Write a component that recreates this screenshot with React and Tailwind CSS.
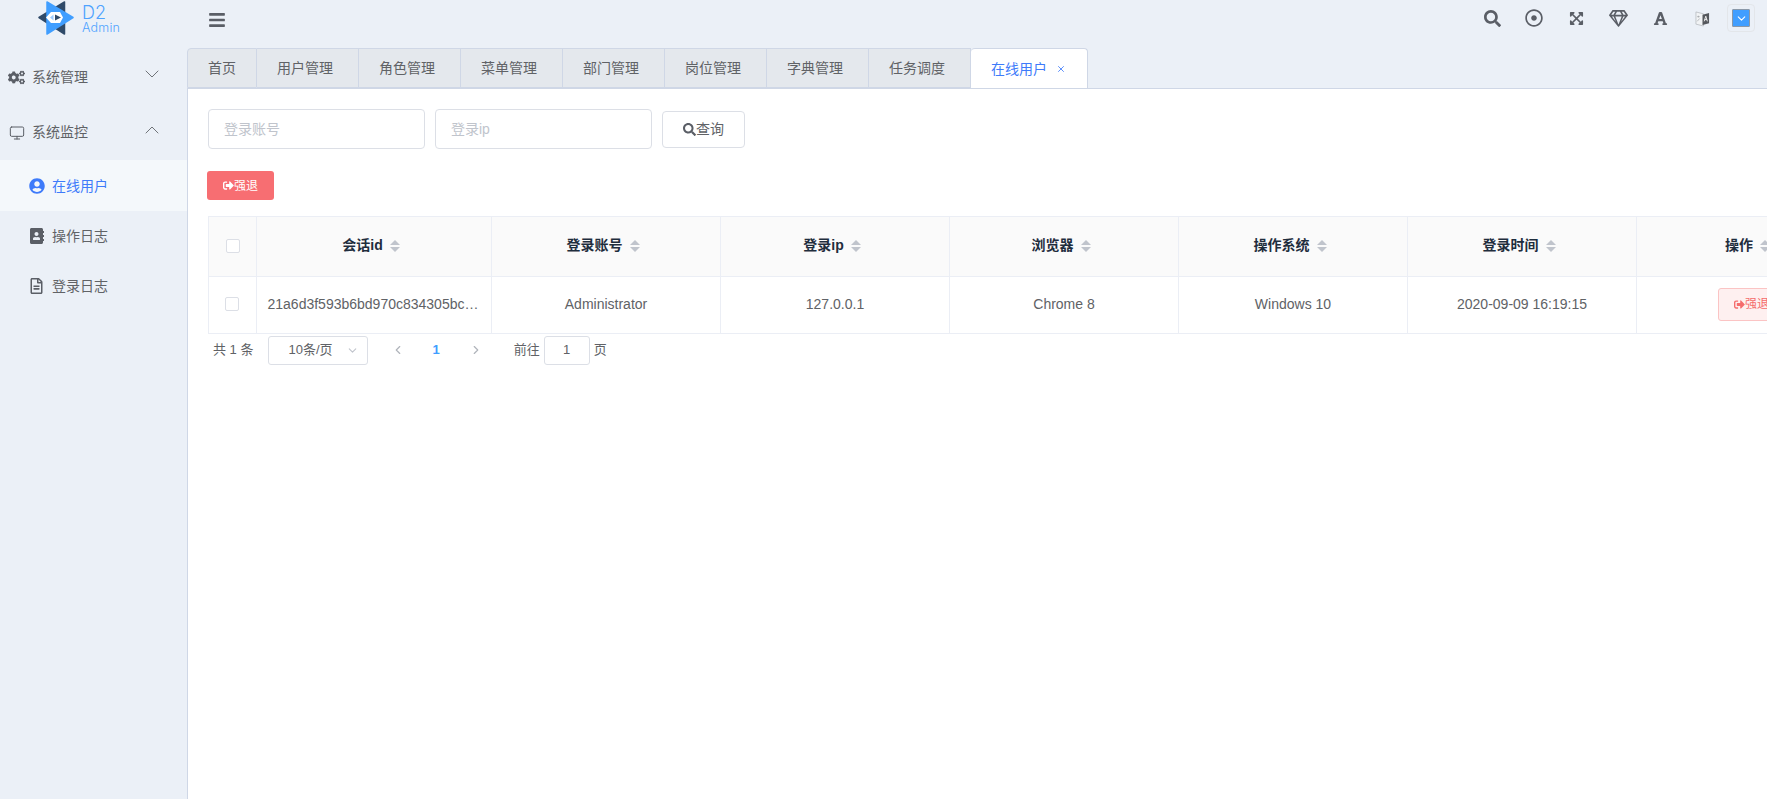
import React from "react";
import { FaSearch, FaRegDotCircle, FaExpandArrowsAlt, FaRegGem, FaFont, FaCogs, FaUserCircle, FaAddressBook, FaRegFileAlt, FaSignOutAlt, FaBars } from "react-icons/fa";
import { ChevronDown, ChevronUp, ChevronLeft, ChevronRight, Monitor, X } from "lucide-react";

const tabs = ["用户管理", "角色管理", "菜单管理", "部门管理", "岗位管理", "字典管理", "任务调度"];
const cols = [
  ["会话id", "21a6d3f593b6bd970c834305bc…", "w-[235px] pr-[2px]"],
  ["登录账号", "Administrator", "w-[229px]"],
  ["登录ip", "127.0.0.1", "w-[229px]"],
  ["浏览器", "Chrome 8", "w-[229px]"],
  ["操作系统", "Windows 10", "w-[229px]"],
  ["登录时间", "2020-09-09 16:19:15", "w-[229px]"],
];

function Sort() {
  return (
    <span className="ml-[7px] inline-flex flex-col gap-[2px]">
      <span className="w-0 h-0 border-x-[5px] border-x-transparent border-b-[5px] border-b-[#c0c4cc]" />
      <span className="w-0 h-0 border-x-[5px] border-x-transparent border-t-[5px] border-t-[#c0c4cc]" />
    </span>
  );
}

function Check() {
  return <span className="block w-[14px] h-[14px] rounded-[2px] border border-[#dcdfe6] bg-white" />;
}

function Logo() {
  return (
    <svg viewBox="0 0 36 34" className="w-[36px] h-[34px]">
      <path d="M1 16.5 L26.5 1 V33 Z" fill="#2f4a69" stroke="#2f4a69" strokeLinejoin="round" strokeWidth="1.5" />
      <path d="M9 1 L35 16.5 L9 33 Z" fill="#409eff" stroke="#409eff" strokeLinejoin="round" strokeWidth="1.5" />
      <path d="M8 16.5 L13 11 H22 L25 16.5 L22 22 H13 Z" fill="#fff" />
      <path d="M12 16.5 L15.5 13.5 V19.5 Z" fill="#9ccbff" />
      <path d="M17 13.5 L23 16.5 L17 19.5 Z" fill="#2f4a69" />
    </svg>
  );
}

function LangIcon() {
  return (
    <svg viewBox="0 0 16 18" className="w-[15px] h-[17px]">
      <path d="M1 2 L9 4 V17 L1 15 Z" fill="#f1f3f5" stroke="#b4b8bd" strokeWidth="0.8" />
      <path d="M8 5 L15 3 V14 L8 16 Z" fill="#55585d" />
      <path d="M9.8 12 L11.5 6.5 L13.2 12 M10.3 10.2 H12.7" fill="none" stroke="#fff" strokeWidth="0.9" />
      <path d="M2.3 7 H5 M3.6 6 V8 M2.3 12 L5 9" fill="none" stroke="#9a9da2" strokeWidth="0.7" />
    </svg>
  );
}

function Slot({ children }) {
  return <span className="w-[42px] flex items-center justify-center">{children}</span>;
}

function App() {
  return (
    <div className="w-full h-screen overflow-hidden flex flex-col bg-[#ebf0f7] text-[14px] text-[#606266] font-['Liberation_Sans','Noto_Sans_CJK_SC',sans-serif]">
      <header className="h-[48px] shrink-0 flex items-start">
        <div className="w-[187px] shrink-0 flex items-start pl-[38px] pt-[1px]">
          <Logo />
          <div className="ml-[8px] text-[#4fa3ff] leading-none font-['Inter',sans-serif] font-light">
            <div className="text-[18px] mt-[3px] leading-[17px]">D2</div>
            <div className="text-[12.5px] mt-[1px] leading-[12px] tracking-[0.2px]">Admin</div>
          </div>
        </div>
        <FaBars className="ml-[21px] mt-[11px] w-[18px] h-[18px] text-[#5a5e66]" />
        <div className="ml-auto mr-[12px] mt-[4px] flex items-center text-[#5a5e66]">
          <Slot><FaSearch className="w-[17px] h-[17px]" /></Slot>
          <Slot><FaRegDotCircle className="w-[18px] h-[18px]" /></Slot>
          <Slot><FaExpandArrowsAlt className="w-[15px] h-[15px]" /></Slot>
          <Slot><FaRegGem className="w-[19px] h-[19px]" /></Slot>
          <Slot><FaFont className="w-[15px] h-[15px]" /></Slot>
          <Slot><LangIcon /></Slot>
          <div className="ml-[4px] w-[28px] h-[28px] rounded-[4px] border border-[#e3e6ea] flex items-center justify-center">
            <span className="w-[18px] h-[18px] bg-[#409eff] rounded-[1px] flex items-center justify-center border border-[#8a98a8]">
              <ChevronDown className="w-[13px] h-[13px] text-white" />
            </span>
          </div>
        </div>
      </header>

      <div className="flex-1 min-h-0 flex">
        <aside className="w-[187px] shrink-0">
          <div className="h-[56px] mt-[1px] flex items-center pl-[8px]">
            <FaCogs className="w-[17px] h-[17px] text-[#5a5e66]" />
            <span className="ml-[7px]">系统管理</span>
            <ChevronDown className="ml-auto mr-[23px] -mt-[6px] w-[24px] h-[24px] text-[#6f7378]" strokeWidth={1} />
          </div>
          <div className="h-[55px] flex items-center pl-[9px]">
            <Monitor className="w-[16px] h-[16px] text-[#5a5e66]" strokeWidth={1.5} />
            <span className="ml-[7px]">系统监控</span>
            <ChevronUp className="ml-auto mr-[23px] -mt-[6px] w-[24px] h-[24px] text-[#6f7378]" strokeWidth={1} />
          </div>
          <div className="h-[51px] pt-[1px] flex items-center pl-[29px] bg-[#f4f8fb] text-[#3e7bfa]">
            <FaUserCircle className="w-[16px] h-[16px]" />
            <span className="ml-[7px]">在线用户</span>
          </div>
          <div className="h-[50px] flex items-center pl-[29px]">
            <FaAddressBook className="w-[16px] h-[16px] text-[#5a5e66]" />
            <span className="ml-[7px]">操作日志</span>
          </div>
          <div className="h-[50px] flex items-center pl-[29px]">
            <FaRegFileAlt className="w-[15px] h-[16px] text-[#5a5e66]" />
            <span className="ml-[8px]">登录日志</span>
          </div>
        </aside>

        <main className="flex-1 min-w-0 flex flex-col">
          <div className="h-[41px] pt-[1px] shrink-0 flex items-end border-b border-[#cfd7e6]">
            <div className="flex h-[40px]">
              <div className="w-[70px] h-[40px] pt-[1px] flex items-center justify-center bg-[#e4e8ed] border border-[#cfd7e6] rounded-tl-[4px]">首页</div>
              {tabs.map((t) => (
                <div key={t} className="w-[102px] h-[40px] pt-[1px] pr-[5px] flex items-center justify-center bg-[#e4e8ed] border border-l-0 border-[#cfd7e6]">{t}</div>
              ))}
              <div className="w-[117px] h-[40px] pt-[1px] pr-[1px] flex items-center justify-center bg-white border border-l-0 border-b-0 border-[#cfd7e6] rounded-t-[4px] text-[#3e7bfa]">
                在线用户
                <X className="ml-[9px] w-[10px] h-[10px]" />
              </div>
            </div>
          </div>

          <div className="flex-1 min-h-0 bg-white border-l border-[#cfd7e6] pl-[20px] pt-[20px] overflow-hidden">
            <div className="flex items-center h-[40px]">
              <div className="w-[217px] h-[40px] border border-[#dcdfe6] rounded-[4px] pl-[15px] flex items-center text-[#c0c4cc]">登录账号</div>
              <div className="ml-[10px] w-[217px] h-[40px] border border-[#dcdfe6] rounded-[4px] pl-[15px] flex items-center text-[#c0c4cc]">登录ip</div>
              <div className="ml-[10px] w-[83px] h-[37px] border border-[#dcdfe6] rounded-[4px] flex items-center justify-center">
                <FaSearch className="w-[13px] h-[13px] text-[#5a5e66]" />查询
              </div>
            </div>
            <div className="mt-[22px] -ml-[1px] w-[67px] h-[29px] bg-[#f76e72] rounded-[3px] flex items-center justify-center text-white text-[12px]">
              <FaSignOutAlt className="w-[11px] h-[11px]" />强退
            </div>
            <div className="mt-[16px] w-[1654px] border-t border-[#ebeef5]">
              <div className="flex h-[60px] pb-0 bg-[#fafafa] border-b border-[#ebeef5] font-bold text-[#1f2d3d]">
                <div className="w-[49px] shrink-0 border-x border-[#ebeef5] flex items-center justify-center pb-[2px]"><Check /></div>
                {cols.map(([h, , w]) => (
                  <div key={h} className={w + " shrink-0 border-r border-[#ebeef5] flex items-center justify-center pr-[6px] pb-[2px]"}>
                    {h}<Sort />
                  </div>
                ))}
                <div className="flex-1 flex items-center justify-center pr-[4px] pb-[2px]">操作<Sort /></div>
              </div>
              <div className="flex h-[57px] border-b border-[#ebeef5]">
                <div className="w-[49px] shrink-0 border-x border-[#ebeef5] flex items-center justify-center pr-[2px] pb-[2px]"><Check /></div>
                {cols.map(([h, v, w]) => (
                  <div key={h} className={w + " shrink-0 border-r border-[#ebeef5] flex items-center justify-center pb-[2px]"}>{v}</div>
                ))}
                <div className="flex-1 flex items-center justify-center pl-[4px] pb-[2px]">
                  <div className="w-[68px] h-[33px] rounded-[3px] bg-[#fef0f0] border border-[#fbc4c4] text-[#f56c6c] text-[12px] flex items-center justify-center">
                    <FaSignOutAlt className="w-[11px] h-[11px]" />强退
                  </div>
                </div>
              </div>
            </div>
            <div className="flex items-center h-[30px] mt-[1px] text-[13px]">
              <span className="ml-[5px]">共 1 条</span>
              <div className="ml-[15px] w-[100px] h-[29px] border border-[#dcdfe6] rounded-[3px] flex items-center pl-[19px]">
                10条/页
                <ChevronDown className="ml-auto mr-[8px] w-[13px] h-[13px] text-[#c0c4cc]" />
              </div>
              <ChevronLeft className="ml-[23px] w-[14px] h-[14px] text-[#b0b4bb]" />
              <span className="ml-[27px] font-bold text-[#409eff]">1</span>
              <ChevronRight className="ml-[29px] w-[14px] h-[14px] text-[#b0b4bb]" />
              <span className="ml-[31px]">前往</span>
              <div className="ml-[4px] w-[46px] h-[29px] border border-[#dcdfe6] rounded-[3px] flex items-center justify-center">1</div>
              <span className="ml-[4px]">页</span>
            </div>
          </div>
        </main>
      </div>
    </div>
  );
}

export default App;
